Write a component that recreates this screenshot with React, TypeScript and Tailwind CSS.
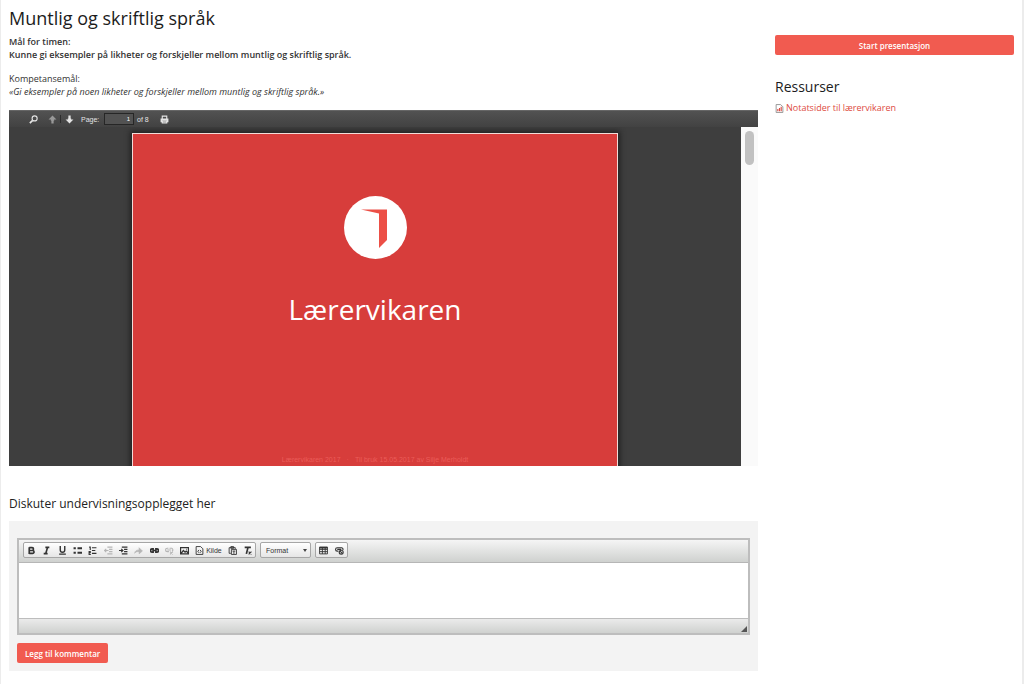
import { useState } from "react";
import type { ReactNode } from "react";

const Icon = ({ children, className = "size-[9px]" }: { children: ReactNode; className?: string }) => (
  <svg viewBox="0 0 16 16" className={className} fill="none" stroke="currentColor" strokeWidth="2" aria-hidden="true">
    {children}
  </svg>
);

const tools = [
  { label: "Fet", icon: <path d="M4 2v12M4 3h5a2.5 2.5 0 0 1 0 5H4M4 8h6a2.5 2.5 0 0 1 0 5H4" strokeWidth="3" /> },
  { label: "Kursiv", icon: <path d="M6 2.500h7M3 13.500h7M10 2 6.500 14" strokeWidth="3" /> },
  { label: "Understreking", icon: <path d="M4 0v7a4 4 0 0 0 8 0V0M2 14.500h12" strokeWidth="2.500" /> },
  { label: "Punktliste", icon: <path d="M1 4h4M1 12h4M8 4h8M8 12h8" strokeWidth="3.500" /> },
  { label: "Nummerert liste", icon: <path d="M2 2h2v5M1 10h3v2H2v3h3M7 3h8M7 8h6M7 13h8" /> },
  { label: "Reduser innrykk", off: true, icon: <path d="M6 2h9M9 6h6M9 10h6M6 14h9M8 8H1M4 5 1 8l3 3" /> },
  { label: "Øk innrykk", icon: <path d="M5 2h10M9 6h6M9 10h6M5 14h10M0 8h7M4 5l3 3-3 3" /> },
  { label: "Gjør om", off: true, icon: <path d="M1 13c1-5 4-6 8-6V3l6 6-6 5v-4c-4 0-6 0-8 3Z" fill="currentColor" strokeWidth="1" /> },
  { label: "Lenke", icon: <path d="M7 5H4a3 3 0 0 0 0 6h3M9 5h3a3 3 0 0 1 0 6H9M4 8h8" strokeWidth="3" /> },
  { label: "Fjern lenke", off: true, icon: <path d="M6 4H4a3 3 0 0 0 0 6h3M8 4h4a3 3 0 0 1 1 5M4 7h7M9 10l5 5M14 10l-5 5" /> },
  { label: "Bilde", icon: <path d="M1 3h14v11H1ZM2 13l4-5 3 3 2-2 4 4M11 6h1" strokeWidth="2.200" /> },
];

const Tool = ({ label, off, children }: { label: string; off?: boolean; children: ReactNode }) => (
  <button type="button" aria-label={label} disabled={off} className="flex flex-1 items-center justify-center text-[#333] disabled:text-[#b5b5b5]">
    {children}
  </button>
);

const group = "flex h-4 rounded-xs border border-[#a6a6a6] bg-linear-to-b from-white to-[#e6e6e6]";

const PdfViewer = () => {
  const [page, setPage] = useState("1");
  return (
    <section aria-label="Presentasjon" className="mt-3 bg-[#3e3e3e] font-['Liberation_Sans',sans-serif]">
      <div className="flex h-[17px] items-center border-t border-[#666] bg-linear-to-b from-[#525252] to-[#424242] pl-5 text-[7px] text-[#e4e4e4]">
        <button type="button" aria-label="Søk" className="w-[11px]">
          <Icon>
            <circle cx="10" cy="6" r="4.500" />
            <path d="m6.500 9.500-5 5" strokeWidth="3" />
          </Icon>
        </button>
        <button type="button" aria-label="Forrige side" disabled className="ml-2 w-[9px] text-[#999]">
          <Icon>
            <path d="M8 1 1 8h4v2h1v5h4v-5h1V8h4Z" fill="currentColor" stroke="none" />
          </Icon>
        </button>
        <span className="ml-[3px] h-2 w-px bg-[#2c2c2c]"></span>
        <button type="button" aria-label="Neste side" className="ml-1 w-[9px]">
          <Icon>
            <path d="m8 15 7-7h-4V6h-1V1H6v5H5v2H1Z" fill="currentColor" stroke="none" />
          </Icon>
        </button>
        <label htmlFor="page" className="ml-[7px] w-[23px]">Page:</label>
        <input
          id="page"
          value={page}
          onChange={(e) => setPage(e.target.value)}
          className="h-3 w-[30px] border border-[#262626] bg-[#525252] pr-[3px] text-right text-[6px] text-white"
        />
        <span className="ml-[3px] w-[15px] whitespace-nowrap">of 8</span>
        <button type="button" aria-label="Skriv ut" className="ml-2">
          <Icon>
            <path d="M4 7V2h8v5" />
            <path d="M1 6h14v7h-3v-3H4v3H1Z" fill="currentColor" stroke="none" />
            <path d="M4 11h8v3H4Z" />
          </Icon>
        </button>
      </div>
      <div className="flex h-[339px]">
        <div className="flex flex-1 justify-center overflow-hidden pt-[6px]">
          <div className="flex h-[365px] w-[486px] flex-col items-center border border-[#f3dcd8] bg-[#d73d3b] pt-[62px] text-white shadow-[0_0_5px_2px_#222]">
            <svg viewBox="0 0 63 63" className="size-[63px] shrink-0" aria-label="Lærervikaren">
              <circle cx="31.500" cy="31.500" r="31.500" fill="#fff" />
              <path d="M17 13.500h26V44l-8 8V17.500Z" fill="#ec4f46" />
            </svg>
            <h2 className="mt-[30px] font-['Open_Sans',sans-serif] text-[28px] leading-10">Lærervikaren</h2>
            <p className="mt-[126px] flex gap-[6px] text-[7px] leading-[10px] text-[#ea5c58]">
              <span>Lærervikaren 2017</span>
              <span>·</span>
              <span>Til bruk 15.05.2017 av Silje Merholdt</span>
            </p>
          </div>
        </div>
        <div className="w-[17px] bg-[#fafafa] px-1 pt-1">
          <div className="h-[34px] w-[9px] rounded-full bg-[#c1c1c1]"></div>
        </div>
      </div>
    </section>
  );
};

const CommentForm = () => {
  const [comment, setComment] = useState("");
  return (
    <form onSubmit={(e) => e.preventDefault()} className="mt-2 bg-[#f3f3f3] px-2 pt-[17px] pb-2">
      <div className="border-2 border-[#bdbdbd] font-['Liberation_Sans',sans-serif]">
        <div className="flex h-[23px] gap-1 border-b border-[#b6b6b6] bg-linear-to-b from-[#f5f5f5] to-[#cfd1cf] px-1 pt-[2px] text-[#333]">
          <div className={`${group} w-[233px]`}>
            {tools.map((t) => (
              <Tool key={t.label} label={t.label} off={t.off}>
                <Icon>{t.icon}</Icon>
              </Tool>
            ))}
            <button type="button" className="flex w-8 items-center justify-center gap-[2px] text-[7px]">
              <Icon className="size-[9px] shrink-0">
                <path d="M2 1h8l4 4v10H2ZM7 7l-2 2.500L7 12M9 7l2 2.500L9 12" strokeWidth="1.600" />
              </Icon>
              Kilde
            </button>
            <Tool label="Lim inn som tekst">
              <Icon>
                <path d="M5 13H2V3h11v2M5 1h5v3H5ZM6 6h9v9H6ZM8 9h5M10.500 9v5" strokeWidth="1.600" />
              </Icon>
            </Tool>
            <Tool label="Fjern formatering">
              <Icon>
                <path d="M3 2.500h11M9 2 6 14" strokeWidth="3" />
                <path d="m10 10 5 5M15 10l-5 5" />
              </Icon>
            </Tool>
          </div>
          <div className={`${group} relative w-[51px]`}>
            <select aria-label="Format" className="w-full appearance-none pl-[5px] text-[7px] leading-none">
              <option>Format</option>
            </select>
            <svg viewBox="0 0 4 3" className="pointer-events-none absolute top-[6px] right-[3px] h-[3px] w-1" aria-hidden="true">
              <path d="M0 0h4L2 3Z" fill="#444" />
            </svg>
          </div>
          <div className={`${group} w-[33px]`}>
            <Tool label="Tabell">
              <Icon>
                <path d="M1 2h14v12H1ZM1 6h14M1 10h14M6 3v11M11 3v11" strokeWidth="1.600" />
                <path d="M1 3h14" strokeWidth="3" />
              </Icon>
            </Tool>
            <Tool label="Sett inn media">
              <Icon>
                <path d="M6 9H4a3 3 0 0 1 0-6h8a3 3 0 0 1 2 4M4 6h7" />
                <circle cx="11" cy="11" r="3.500" />
                <path d="m9 9 4 4" />
              </Icon>
            </Tool>
          </div>
        </div>
        <textarea
          aria-label="Kommentar"
          value={comment}
          onChange={(e) => setComment(e.target.value)}
          className="block h-[55px] w-full resize-none bg-white p-2 text-[9px] outline-none"
        />
        <div className="flex h-[15px] items-end justify-end border-t border-[#bdbdbd] bg-linear-to-b from-[#ebebeb] to-[#cfd1cf] pr-px pb-px">
          <svg viewBox="0 0 6 6" className="size-[6px]" aria-hidden="true">
            <path d="M6 0v6H0Z" fill="#555" />
          </svg>
        </div>
      </div>
      <button type="submit" className="mt-2 block h-5 rounded-xs bg-[#f15b50] px-2 text-[8px] font-semibold text-white">
        Legg til kommentar
      </button>
    </form>
  );
};

const App = () => {
  return (
    <div className="flex min-h-screen gap-[17px] border-r-2 border-l border-[#ececec] bg-white pr-2 pl-2 font-['Open_Sans',sans-serif] text-[9px] leading-[13px] text-[#333]">
      <main className="min-w-0 flex-1 pt-[6px]">
        <h1 className="text-[18px] leading-6 text-[#1c1c1c]">Muntlig og skriftlig språk</h1>
        <p className="mt-[5px] font-semibold">
          Mål for timen:
          <br />
          Kunne gi eksempler på likheter og forskjeller mellom muntlig og skriftlig språk.
        </p>
        <p className="mt-[11px]">
          Kompetansemål:
          <br />
          <em>«Gi eksempler på noen likheter og forskjeller mellom muntlig og skriftlig språk.»</em>
        </p>
        <PdfViewer />
        <h2 className="mt-[29px] text-[12px] leading-[18px] text-[#222]">Diskuter undervisningsopplegget her</h2>
        <CommentForm />
      </main>
      <aside className="w-[239px] pt-[35px]">
        <button type="button" className="block h-5 w-full rounded-xs bg-[#f15b50] text-[8px] font-semibold text-white">
          Start presentasjon
        </button>
        <h2 className="mt-[22px] text-[14px] leading-5 text-[#1c1c1c]">Ressurser</h2>
        <a href="#notatsider" className="mt-1 flex items-center gap-[2px] text-[#dd4b42]">
          <Icon className="mt-[2px] size-[9px]">
            <path d="M2 1h8l4 4v10H2Z" stroke="#888" strokeWidth="1.500" />
            <path d="M5 13V9M8 13V7M11 13V5" stroke="#dd4b42" />
          </Icon>
          Notatsider til lærervikaren
        </a>
      </aside>
    </div>
  );
};

export default App;
